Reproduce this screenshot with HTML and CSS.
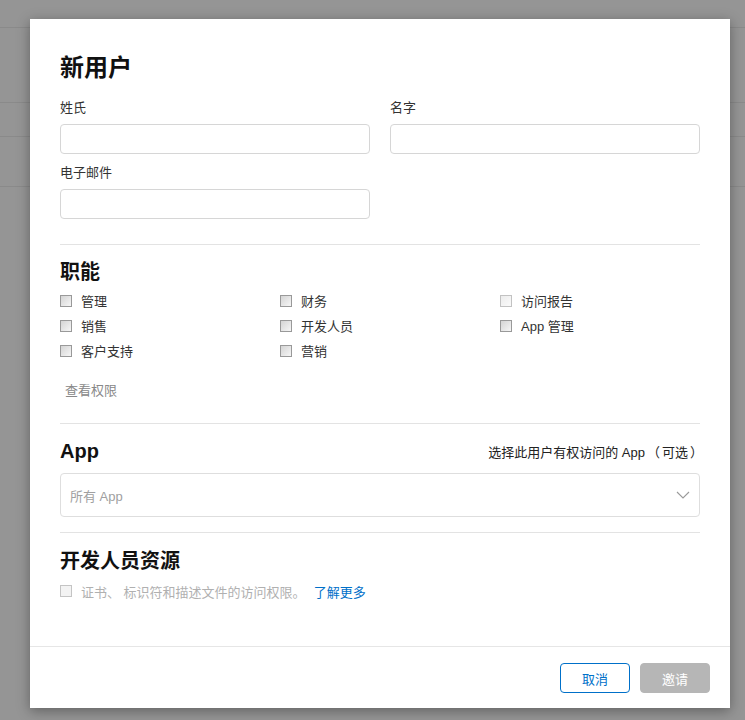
FILE: index.html
```html
<!DOCTYPE html>
<html lang="zh-CN">
<head>
<meta charset="utf-8">
<title>新用户</title>
<link rel="stylesheet" href="styles.css">
</head>
<body>
<div class="backdrop">
  <div class="bg-row r1"></div>
  <div class="bg-row r2"></div>
  <div class="bg-row r3"></div>
  <div class="bg-row r4"></div>
</div>
<div class="dialog">
  <div class="content">
    <h1 class="title">新用户</h1>
    <div class="name-grid">
      <div class="field">
        <label class="field-label">姓氏</label>
        <div class="input"></div>
      </div>
      <div class="field">
        <label class="field-label">名字</label>
        <div class="input"></div>
      </div>
      <div class="field">
        <label class="field-label">电子邮件</label>
        <div class="input"></div>
      </div>
    </div>

    <div class="divider d1"></div>

    <h2 class="section-title">职能</h2>
    <div class="roles">
      <div class="check"><span class="box"></span><span>管理</span></div>
      <div class="check"><span class="box"></span><span>财务</span></div>
      <div class="check"><span class="box light"></span><span>访问报告</span></div>
      <div class="check"><span class="box"></span><span>销售</span></div>
      <div class="check"><span class="box"></span><span>开发人员</span></div>
      <div class="check"><span class="box"></span><span>App 管理</span></div>
      <div class="check"><span class="box"></span><span>客户支持</span></div>
      <div class="check"><span class="box"></span><span>营销</span></div>
    </div>
    <div class="perm-link">查看权限</div>

    <div class="divider d2"></div>

    <div class="app-head">
      <h2 class="section-title">App</h2>
      <span class="hint">选择此用户有权访问的 App<span class="paren">（</span>可选<span class="paren">）</span></span>
    </div>
    <div class="select">
      <span class="placeholder">所有 App</span>
      <svg class="chev" width="14" height="8" viewBox="0 0 14 8"><path d="M1 1 L7 7 L13 1" fill="none" stroke="#9a9a9a" stroke-width="1.1"/></svg>
    </div>

    <div class="divider d3"></div>

    <h2 class="section-title last">开发人员资源</h2>
    <div class="dev-row">
      <span class="box disabled"></span>
      <span class="dev-text">证书、 标识符和描述文件的访问权限。</span>
      <a class="learn">了解更多</a>
    </div>
  </div>
  <div class="footer">
    <button class="btn cancel">取消</button>
    <button class="btn invite">邀请</button>
  </div>
</div>
</body>
</html>
```

FILE: styles.css
```css
html, body {
  margin: 0;
  padding: 0;
}
body {
  background: #959595;
  font-family: "Liberation Sans", "Noto Sans CJK SC", sans-serif;
  color: #333;
  width: 745px;
  height: 720px;
  overflow: hidden;
  position: relative;
}
.backdrop {
  display: flex;
  flex-direction: column;
}
.bg-row {
  border-bottom: 1px solid #8a8a8a;
}
.r1 { height: 27px; }
.r2 { height: 74px; }
.r3 { height: 33px; }
.r4 { height: 49px; }

.dialog {
  position: absolute;
  left: 30px;
  top: 19px;
  width: 700px;
  height: 689px;
  background: #fff;
  box-shadow: 0 3px 12px rgba(0, 0, 0, 0.35);
  display: flex;
  flex-direction: column;
}
.content {
  padding: 34px 30px 0;
  flex: 1;
}
.title {
  margin: 0;
  font-size: 24px;
  line-height: 30px;
  font-weight: bold;
  color: #111;
}
.name-grid {
  margin-top: 17px;
  display: grid;
  grid-template-columns: 1fr 1fr;
  column-gap: 20px;
  row-gap: 11px;
}
.field-label {
  display: block;
  font-size: 13px;
  line-height: 16px;
  color: #333;
  margin-bottom: 8px;
}
.input {
  height: 28px;
  border: 1px solid #d6d6d6;
  border-radius: 4px;
  background: #fff;
}
.divider {
  height: 1px;
  background: #e3e3e3;
}
.d1 { margin-top: 25px; }
.d2 { margin-top: 22px; }
.d3 { margin-top: 15px; }
.section-title {
  margin: 15px 0 0;
  font-size: 20px;
  line-height: 24px;
  font-weight: bold;
  color: #111;
}
.section-title.last {
  margin-top: 16px;
}
.roles {
  margin-top: 4px;
  display: grid;
  grid-template-columns: 220px 220px 1fr;
  grid-auto-rows: 25px;
}
.check {
  display: flex;
  align-items: center;
  gap: 9px;
  font-size: 13px;
  color: #333;
}
.box {
  width: 10px;
  height: 10px;
  border: 1px solid #999;
  background: linear-gradient(135deg, #d4d4d4, #f6f6f6);
  flex: none;
}
.box.light {
  border-color: #c2c2c2;
  background: linear-gradient(135deg, #ececec, #fafafa);
}
.box.disabled {
  border-color: #c4c4c4;
  background: #f3f3f3;
}
.perm-link {
  margin: 18px 0 0 5px;
  font-size: 13px;
  line-height: 20px;
  color: #888;
}
.app-head {
  display: flex;
  justify-content: space-between;
  align-items: center;
  margin-top: 15px;
}
.app-head .section-title {
  margin: 0;
}
.hint {
  font-size: 13px;
  color: #222;
  margin-right: -5px;
}
.paren {
  margin: 0 2px;
}
.select {
  margin-top: 10px;
  height: 42px;
  border: 1px solid #dedede;
  border-radius: 4px;
  display: flex;
  align-items: center;
  justify-content: space-between;
  padding: 0 9px 0 9px;
}
.placeholder {
  font-size: 13px;
  color: #a0a0a0;
}
.chev {
  display: block;
}
.dev-row {
  margin-top: 8px;
  display: flex;
  align-items: center;
  height: 20px;
  font-size: 13px;
}
.dev-row .box {
  margin-right: 9px;
}
.dev-text {
  color: #b0b0b0;
}
.learn {
  margin-left: 8px;
  color: #0070c9;
}
.footer {
  border-top: 1px solid #e6e6e6;
  padding: 16px 20px 15px;
  display: flex;
  justify-content: flex-end;
  gap: 10px;
}
.btn {
  width: 70px;
  height: 30px;
  border-radius: 4px;
  font-family: "Liberation Sans", "Noto Sans CJK SC", sans-serif;
  font-size: 13px;
  padding: 0;
}
.cancel {
  background: #fff;
  border: 1px solid #0070c9;
  color: #0070c9;
}
.invite {
  background: #b6b6b6;
  border: 1px solid #b6b6b6;
  color: #fff;
}
```
